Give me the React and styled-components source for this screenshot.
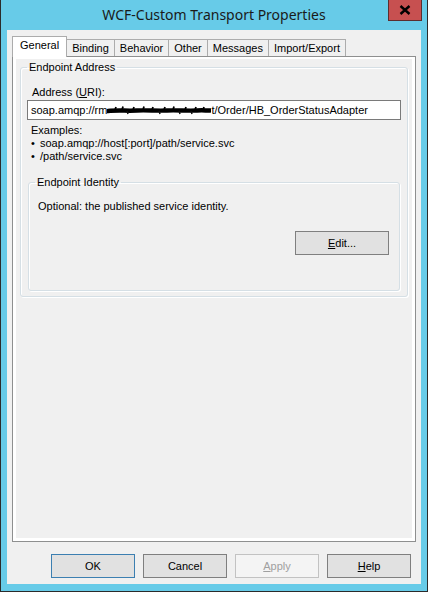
import React from 'react';
import styled, { createGlobalStyle, css } from 'styled-components';

const GlobalStyle = createGlobalStyle`
  html, body {
    margin: 0;
    padding: 0;
    background: #67cbe8;
  }
  body {
    font-family: "Liberation Sans", Arial, sans-serif;
    font-size: 11px;
    color: #000;
  }
`;

const TABS = ['General', 'Binding', 'Behavior', 'Other', 'Messages', 'Import/Export'];

// underline one letter of the label (keyboard mnemonic)
const Mnemonic = ({ text, at = 0 }) => (
  <>
    {text.slice(0, at)}
    <u>{text[at]}</u>
    {text.slice(at + 1)}
  </>
);

// the blacked-out part of the host name
const Redaction = () => (
  <Scribble width="104" height="12" viewBox="0 0 104 12">
    <path
      d="M1 7 C 10 6, 20 7, 30 6.5 S 50 7, 60 6.5 S 80 7, 90 6.5 S 98 7, 103 6.5"
      stroke="#000"
      strokeWidth="4.5"
      fill="none"
      strokeLinecap="round"
    />
    <path
      d="M8 6 L9 3 M15 6 L16 2.5 M26 6 L27 3 M36 6 L37 2.5 M45 6 L46 3 M57 6 L58 3 M66 6 L67 2.5 M78 6 L79 3 M88 6 L89 3 M96 6 L97 3"
      stroke="#000"
      strokeWidth="1.8"
    />
    <path d="M20 7 L21 10 M52 7 L53 10 M72 7 L73 10 M84 7 L85 10" stroke="#111" strokeWidth="1.5" />
  </Scribble>
);

export default function App() {
  return (
    <>
      <GlobalStyle />
      <Window>
        <TitleBar>
          <span />
          <Title>WCF-Custom Transport Properties</Title>
          <CloseButton aria-label="Close">
            <svg width="12" height="10" viewBox="0 0 12 10">
              <path d="M1.5 1 L10.5 9 M10.5 1 L1.5 9" stroke="#000" strokeWidth="2.4" />
            </svg>
          </CloseButton>
        </TitleBar>

        <Client>
          <TabStrip>
            {TABS.map((t) => (
              <Tab key={t} active={t === 'General'}>{t}</Tab>
            ))}
          </TabStrip>

          <TabPanel>
            <Page>
              <Group>
                <Legend>Endpoint Address</Legend>
                <FieldLabel>Address (<Mnemonic text="URI" />):</FieldLabel>
                <TextBox>
                  soap.amqp://rm<Redaction />t/Order/HB_OrderStatusAdapter
                </TextBox>
                <Examples>
                  <div>Examples:</div>
                  <Bullet>soap.amqp://host[:port]/path/service.svc</Bullet>
                  <Bullet>/path/service.svc</Bullet>
                </Examples>

                <InnerGroup>
                  <Legend shift={-3}>Endpoint Identity</Legend>
                  <Hint>Optional: the published service identity.</Hint>
                  <EditRow>
                    <Button wide><Mnemonic text="Edit..." /></Button>
                  </EditRow>
                </InnerGroup>
              </Group>
            </Page>
          </TabPanel>

          <ButtonRow>
            <Button primary>OK</Button>
            <Button>Cancel</Button>
            <Button disabled><Mnemonic text="Apply" /></Button>
            <Button><Mnemonic text="Help" /></Button>
          </ButtonRow>
        </Client>
      </Window>
    </>
  );
}

// styles
const Window = styled.div`
  box-sizing: border-box;
  width: 428px;
  height: 592px;
  display: flex;
  flex-direction: column;
  background: #67cbe8;
  border: 1px solid #2b2b2b;
  border-top: none;
  padding: 0 6px 7px 6px;
`;

const TitleBar = styled.div`
  height: 30px;
  display: grid;
  grid-template-columns: 1fr auto 1fr;
  align-items: start;
  margin: 0 -6px 0 -6px;
`;

const Title = styled.div`
  font-family: "Noto Sans", "Open Sans", sans-serif;
  font-size: 14px;
  line-height: 30px;
  color: #1a1a1a;
`;

const CloseButton = styled.div`
  justify-self: end;
  box-sizing: border-box;
  width: 34px;
  height: 21px;
  margin-right: 5px;
  background: #c75050;
  border: 1px solid #5c2e2e;
  border-top: none;
  display: flex;
  align-items: center;
  justify-content: center;
`;

const Client = styled.div`
  flex: 1;
  display: flex;
  flex-direction: column;
  background: #f0f0f0;
  padding: 6px 10px 6px 5px;
`;

const TabStrip = styled.div`
  display: flex;
  align-items: flex-end;
  height: 20px;
  padding-left: 2px;
  position: relative;
  z-index: 1;
`;

const Tab = styled.div`
  box-sizing: border-box;
  height: 17px;
  padding: 0 5px;
  margin-right: -1px;
  line-height: 16px;
  background: #f0f0f0;
  border: 1px solid #acacac;
  border-bottom: none;
  white-space: nowrap;
  ${(p) => p.active && css`
    height: 21px;
    margin: 0 -1px -1px -2px;
    padding: 0 7px;
    line-height: 17px;
    background: #fff;
    position: relative;
    z-index: 2;
  `}
`;

const TabPanel = styled.div`
  flex: 1;
  display: flex;
  margin-right: -5px;
  background: #fff;
  border: 1px solid #8e8f8f;
  padding: 2px 3px 3px 3px;
`;

const Page = styled.div`
  flex: 1;
  background: #f0f0f0;
  padding: 2px 4px;
`;

const Group = styled.fieldset`
  margin: 0;
  padding: 4px 6px 5px 6px;
  border: 1px solid #d5dfe5;
  border-radius: 3px;
  box-shadow: inset 1px 1px 0 #fff, 1px 1px 0 #fff;
`;

const InnerGroup = styled(Group)`
  margin: 13px 1px 0 1px;
  padding: 4px 10px 35px 9px;
`;

const Legend = styled.legend`
  margin-left: ${(p) => p.shift || 0}px;
  padding: 0 2px;
  line-height: 13px;
`;

const FieldLabel = styled.div`
  margin: 8px 0 0 5px;
  line-height: 13px;
`;

const TextBox = styled.div`
  box-sizing: border-box;
  height: 20px;
  margin-top: 1px;
  padding: 0 3px;
  background: #fff;
  border: 1px solid #7a7a7a;
  display: flex;
  align-items: center;
  white-space: nowrap;
  overflow: hidden;
`;

const Scribble = styled.svg`
  flex: none;
  display: block;
`;

const Examples = styled.div`
  margin: 4px 0 0 4px;
  line-height: 13px;
`;

const Bullet = styled.div`
  &::before {
    content: '•';
    display: inline-block;
    width: 9px;
  }
`;

const Hint = styled.div`
  line-height: 13px;
  margin-top: 7px;
`;

const EditRow = styled.div`
  display: flex;
  justify-content: flex-end;
  margin-top: 18px;
`;

const ButtonRow = styled.div`
  display: flex;
  justify-content: flex-end;
  gap: 8px;
  margin-top: 12px;
`;

const Button = styled.button`
  box-sizing: border-box;
  flex: none;
  width: ${(p) => (p.wide ? 94 : 84)}px;
  height: 24px;
  padding: 0;
  font-family: "Liberation Sans", Arial, sans-serif;
  font-size: 11px;
  color: #000;
  background: #e1e1e1;
  border: 1px solid #7f7f7f;
  border-radius: 0;
  ${(p) => p.primary && css`
    border-color: #3c7fb1;
  `}
  &:disabled {
    color: #a0a0a0;
    background: #f4f4f4;
    border-color: #c2c2c2;
  }
`;
